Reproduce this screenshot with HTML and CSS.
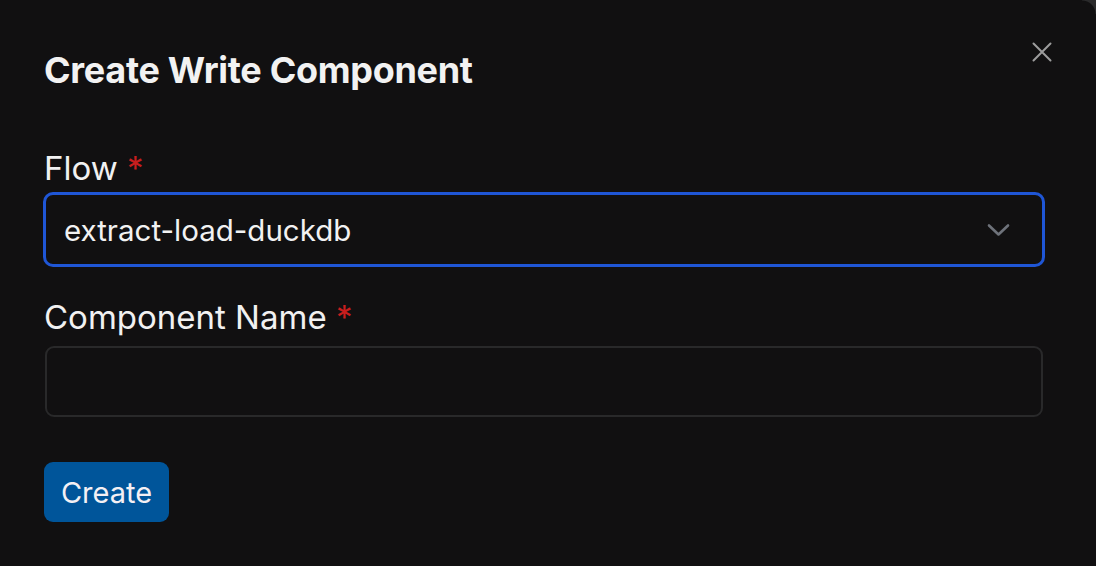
FILE: index.html
```html
<!DOCTYPE html>
<html lang="en">
<head>
<meta charset="utf-8">
<title>Create Write Component</title>
<link rel="stylesheet" href="styles.css">
</head>
<body>
<div class="modal">
  <button class="close" aria-label="Close">
    <svg width="20" height="20" viewBox="0 0 20 20" fill="none" stroke="currentColor" stroke-width="2" stroke-linecap="round"><path d="M1.5 1.5L18.5 18.5M18.5 1.5L1.5 18.5"/></svg>
  </button>
  <h1 class="title">Create Write Component</h1>
  <div class="field field-flow">
    <label class="label">Flow <span class="req">*</span></label>
    <div class="select">
      <span class="select-value">extract-load-duckdb</span>
      <svg class="chevron" width="23" height="14" viewBox="0 0 23 14" fill="none" stroke="currentColor" stroke-width="2.6" stroke-linecap="round" stroke-linejoin="round"><path d="M2 2.5L11.5 11.5L21 2.5"/></svg>
    </div>
  </div>
  <div class="field field-name">
    <label class="label">Component Name <span class="req">*</span></label>
    <div class="input"></div>
  </div>
  <button class="create">Create</button>
</div>
</body>
</html>
```

FILE: styles.css
```css
html, body {
  margin: 0;
  padding: 0;
  height: 100%;
}
body {
  background: #111011;
  font-family: Inter, "Noto Sans", sans-serif;
  color: #f1f1f1;
  overflow: hidden;
}
.modal {
  position: relative;
  box-sizing: border-box;
  height: 566px;
  padding: 48px 53px 0 44px;
  background: #111011;
  display: flex;
  flex-direction: column;
  align-items: flex-start;
}
.modal::after {
  content: "";
  position: absolute;
  top: 0;
  right: 0;
  width: 14px;
  height: 14px;
  background: radial-gradient(circle at 0 100%, transparent 13px, #2a2a2b 14px);
}
.close {
  position: absolute;
  top: 42px;
  right: 44px;
  padding: 0;
  border: 0;
  background: none;
  color: #9d9d9d;
  display: flex;
}
.title {
  margin: 0;
  font-size: 36px;
  font-weight: 700;
  letter-spacing: -0.3px;
  line-height: 44px;
  color: #f2f2f2;
}
.field {
  align-self: stretch;
  display: flex;
  flex-direction: column;
}
.field-flow { margin-top: 56px; }
.field-name { margin-top: 30px; }
.label {
  font-size: 33px;
  line-height: 40px;
  color: #f1f1f1;
}
.req { color: #c81e1e; }
.field-flow .label { margin-bottom: 4px; }
.field-name .label { margin-bottom: 9px; }
.select {
  box-sizing: border-box;
  height: 75px;
  margin: 0 -2px 0 -1px;
  border: 3px solid #1f56d6;
  border-radius: 10px;
  display: flex;
  align-items: center;
  justify-content: space-between;
  padding: 0 32px 0 18px;
}
.select-value {
  font-size: 29.5px;
  color: #f2f2f2;
}
.chevron { color: #6e727a; }
.input {
  box-sizing: border-box;
  height: 71px;
  margin-left: 1px;
  border: 2px solid #29292a;
  border-radius: 9px;
}
.create {
  margin-top: 45px;
  height: 60px;
  width: 125px;
  padding: 0;
  border: 0;
  border-radius: 9px;
  background: #00559a;
  color: #f4f0f4;
  font-family: inherit;
  font-size: 29px;
}
```
